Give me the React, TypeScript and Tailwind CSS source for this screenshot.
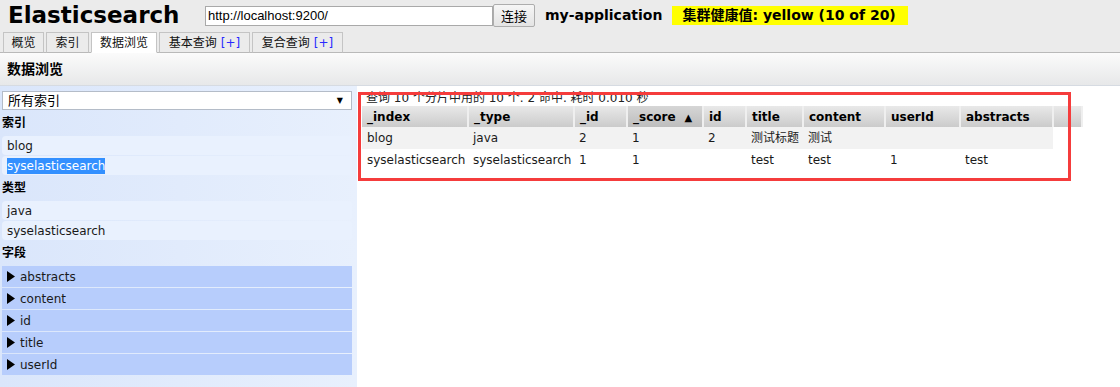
import React from 'react';

const tabs = [
  { label: '概览', plus: false, active: false, w: 'w-[41px]' },
  { label: '索引', plus: false, active: false, w: 'w-[43px]' },
  { label: '数据浏览', plus: false, active: true, w: 'w-[66px]' },
  { label: '基本查询', plus: true, active: false, w: 'w-[91px]' },
  { label: '复合查询', plus: true, active: false, w: 'w-[91px]' },
];

const columns = [
  { key: '_index', w: 'w-[106px]' },
  { key: '_type', w: 'w-[106px]' },
  { key: '_id', w: 'w-[53px]' },
  { key: '_score', w: 'w-[76px]', sorted: true },
  { key: 'id', w: 'w-[43px]' },
  { key: 'title', w: 'w-[57px]' },
  { key: 'content', w: 'w-[82px]' },
  { key: 'userId', w: 'w-[75px]' },
  { key: 'abstracts', w: 'w-[93px]' },
];

const rows: Record<string, string>[] = [
  { _index: 'blog', _type: 'java', _id: '2', _score: '1', id: '2', title: '测试标题', content: '测试', userId: '', abstracts: '' },
  { _index: 'syselasticsearch', _type: 'syselasticsearch', _id: '1', _score: '1', id: '', title: 'test', content: 'test', userId: '1', abstracts: 'test' },
];

const fields = ['abstracts', 'content', 'id', 'title', 'userId'];

function SideHeading({ children }: { children: React.ReactNode }) {
  return <div className="h-[25px] flex items-center pl-[2px] text-[12px] font-bold text-black">{children}</div>;
}

function SideItem({ children, selected }: { children: React.ReactNode; selected?: boolean }) {
  return (
    <div className="h-[19px] mt-[1px] ml-[2px] mr-[5px] rounded-[4px] bg-[#e9f1fe] flex items-center pl-[5px] text-[12px] text-[#1a1a1a]">
      {selected ? <span className="bg-[#3390ff] text-white leading-[16px]">{children}</span> : children}
    </div>
  );
}

export default function App() {
  return (
    <div className="h-[387px] w-[1120px] overflow-hidden flex flex-col bg-white font-['DejaVu_Sans','Noto_Sans_CJK_SC',sans-serif] text-black">
      {/* Top header */}
      <div className="bg-[#ebebeb] border-b border-[#b9b9b9]">
        <div className="h-[31px] flex items-center">
          <h1 className="ml-[8px] w-[197px] text-[23px] font-bold leading-none">Elasticsearch</h1>
          <input
            readOnly
            value="http://localhost:9200/"
            className="w-[288px] h-[20px] bg-white border border-[#a9a9a9] px-[2px] text-[13px] font-['Liberation_Sans',sans-serif] outline-none"
          />
          <button className="w-[42px] h-[23px] border border-[#adadad] rounded-[2px] bg-gradient-to-b from-[#f6f6f6] to-[#e4e4e4] text-[13px] font-['Noto_Sans_CJK_SC',sans-serif]">
            连接
          </button>
          <span className="ml-[10px] text-[14px] font-bold">my-application</span>
          <span className="ml-[10px] h-[19px] bg-[#ffff00] pl-[10px] pr-[12px] flex items-center text-[14px] font-bold">
            集群健康值: yellow (10 of 20)
          </span>
        </div>
        <div className="h-[21px] flex items-end pl-[3px] gap-[2px]">
          {tabs.map((t) => (
            <div
              key={t.label}
              className={`${t.w} h-[21px] -mb-[1px] border border-[#c4c4c4] ${t.active ? 'bg-white border-b-white' : 'bg-[#ebebeb] border-b-[#b9b9b9]'} flex items-end justify-center pb-[1px] text-[12px] leading-[16px] text-[#111]`}
            >
              <span>{t.label}</span>
              {t.plus && <span className="ml-[4px] text-[#2a2aff]">[+]</span>}
            </div>
          ))}
        </div>
      </div>

      {/* Sub header */}
      <div className="h-[33px] bg-gradient-to-b from-[#fbfbfb] to-[#e7e8e9] border-b border-[#d6dbe2] flex items-center pl-[7px] text-[14px] font-bold">
        数据浏览
      </div>

      {/* Body */}
      <div className="flex-1 flex min-h-0">
        {/* Sidebar */}
        <div className="w-[357px] bg-gradient-to-r from-[#dae6fb] to-[#e8f0fd] pt-[5px]">
          <div className="ml-[2px] mr-[5px] h-[19px] bg-white border border-[#b4bcc8] flex items-center justify-between pl-[5px] pr-[8px] text-[13px]">
            <span>所有索引</span>
            <span className="text-[8px] leading-none">▼</span>
          </div>
          <SideHeading>索引</SideHeading>
          <SideItem>blog</SideItem>
          <SideItem selected>syselasticsearch</SideItem>
          <SideHeading>类型</SideHeading>
          <SideItem>java</SideItem>
          <SideItem>syselasticsearch</SideItem>
          <SideHeading>字段</SideHeading>
          <div className="mt-[1px] ml-[2px] mr-[5px] flex flex-col gap-[1px]">
            {fields.map((f) => (
              <div key={f} className="h-[21px] bg-[#b7cdfc] flex items-center pl-[5px] text-[12px] text-[#1a1a1a]">
                <svg width="8" height="11" viewBox="0 0 8 11" className="mr-[5px]">
                  <polygon points="0,0 8,5.5 0,11" fill="#000" />
                </svg>
                {f}
              </div>
            ))}
          </div>
        </div>

        {/* Main */}
        <div className="relative flex-1 pt-[4px] pl-[5px]">
          <div className="h-[16px] pl-[4px] text-[12px] leading-[16px] text-[#222]">
            查询 10 个分片中用的 10 个. 2 命中. 耗时 0.010 秒
          </div>
          <table className="border-collapse table-fixed text-[12px]">
            <thead>
              <tr className="h-[21px]">
                {columns.map((c) => (
                  <th
                    key={c.key}
                    className={`${c.w} p-0 pl-[5px] text-left font-bold border-r-[2px] border-[#efefef] ${c.sorted ? 'bg-gradient-to-b from-[#d6d6d6] to-[#bdbdbd]' : 'bg-gradient-to-b from-[#e9e9e9] to-[#cbcbcb]'}`}
                  >
                    {c.key}
                    {c.sorted && <span className="ml-[9px] text-[10px]">▲</span>}
                  </th>
                ))}
                <th className="w-[29px] p-0 bg-gradient-to-b from-[#e9e9e9] to-[#cbcbcb] border-r-[2px] border-[#efefef]" />
              </tr>
            </thead>
            <tbody>
              {rows.map((r, i) => (
                <tr key={i} className="h-[22px]">
                  {columns.map((c) => (
                    <td
                      key={c.key}
                      className={`p-0 pl-[5px] whitespace-nowrap text-[#1a1a1a] ${i === 0 ? 'bg-[#f2f2f2]' : 'bg-white'}`}
                    >
                      {r[c.key]}
                    </td>
                  ))}
                  <td className="p-0 bg-white" />
                </tr>
              ))}
            </tbody>
          </table>

          {/* red annotation box */}
          <div className="absolute left-[1px] top-[6px] w-[713px] h-[89px] border-[3px] border-[#f53c3c] pointer-events-none" />
        </div>
      </div>
    </div>
  );
}
